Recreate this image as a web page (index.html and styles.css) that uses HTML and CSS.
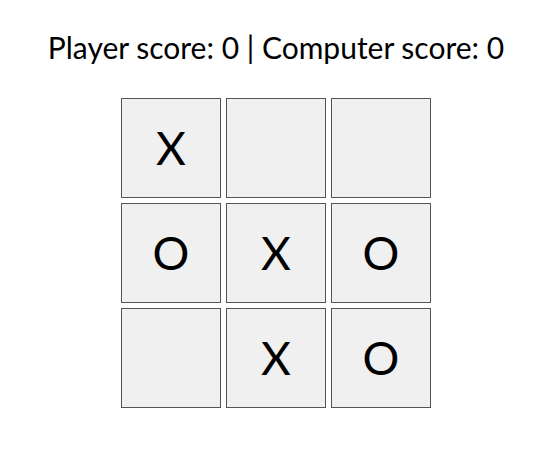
FILE: index.html
```html
<!DOCTYPE html>
<html>
<head>
<meta charset="utf-8">
<link rel="stylesheet" href="styles.css">
</head>
<body>
<div class="game">
  <h1 class="score">Player score: 0 | Computer score: 0</h1>
  <div class="board">
    <div class="cell">X</div>
    <div class="cell"></div>
    <div class="cell"></div>
    <div class="cell">O</div>
    <div class="cell">X</div>
    <div class="cell">O</div>
    <div class="cell"></div>
    <div class="cell">X</div>
    <div class="cell">O</div>
  </div>
</div>
</body>
</html>
```
FILE: styles.css
```css
html, body {
  margin: 0;
  padding: 0;
  background: #fff;
}
body {
  font-family: "Lato", "Open Sans", sans-serif;
  color: #000;
}
.game {
  display: flex;
  flex-direction: column;
  align-items: center;
  padding-left: 3px;
  padding-top: 27px;
}
.score {
  margin: 0 0 31px;
  font-size: 30px;
  font-weight: 400;
  line-height: 40px;
}
.board {
  display: grid;
  grid-template-columns: repeat(3, 100px);
  grid-auto-rows: 100px;
  gap: 5px;
}
.cell {
  box-sizing: border-box;
  border: 1px solid #555;
  background: #f0f0f0;
  display: flex;
  align-items: center;
  justify-content: center;
  font-size: 46px;
  line-height: 1;
}
```
